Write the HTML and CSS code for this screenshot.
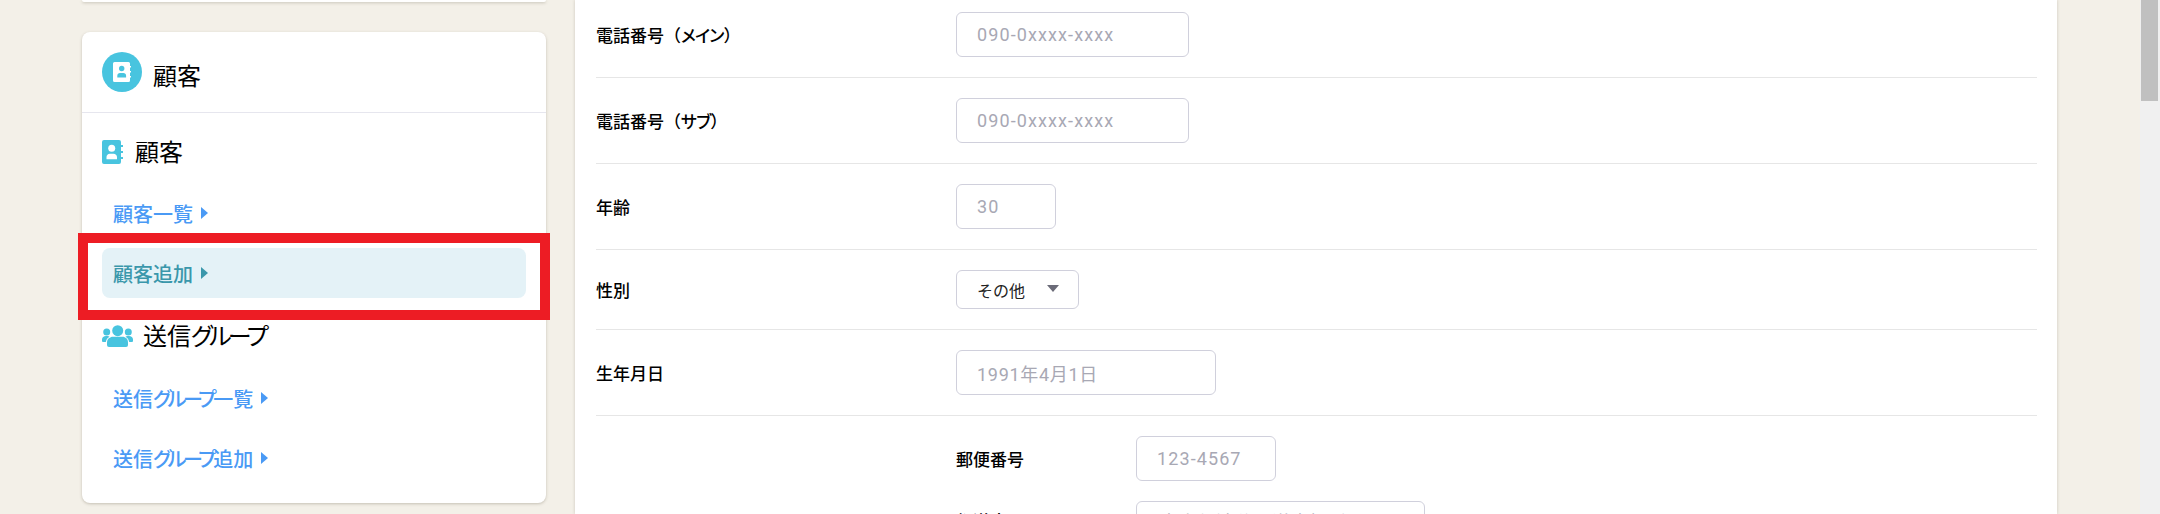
FILE: index.html
```html
<!DOCTYPE html>
<html lang="ja">
<head>
<meta charset="utf-8">
<title>顧客追加</title>
<link rel="stylesheet" href="styles.css">
</head>
<body>
<div class="page">
  <aside class="side">
    <div class="card-stub"></div>
    <nav class="card">
      <div class="card-head">
        <span class="circle">
          <svg class="book-white" viewBox="0 0 18 20"><path fill="#fff" d="M1.500 0h14a1.500 1.500 0 0 1 1.500 1.500V4h1v1.500h-1V9h1v1.500h-1V14h1v1.500h-1v3a1.500 1.500 0 0 1-1.500 1.500h-14A1.500 1.500 0 0 1 0 18.500v-17A1.500 1.500 0 0 1 1.500 0z"/><circle cx="8.700" cy="6.500" r="2.700" fill="#48c4df"/><path fill="#48c4df" d="M4.300 15.500v-1.800c0-1.600 1.200-2.700 2.700-2.700h3.400c1.500 0 2.700 1.100 2.700 2.700v1.800z"/></svg>
        </span>
        <span class="card-title">顧客</span>
      </div>
      <div class="group-head">
        <svg class="book" viewBox="0 0 21 25"><path fill="#48c4df" d="M2 0h15a2 2 0 0 1 2 2v3h2v2h-2v4h2v2h-2v4h2v2h-2v3a2 2 0 0 1-2 2H2a2 2 0 0 1-2-2V2a2 2 0 0 1 2-2z"/><circle cx="9.700" cy="8.300" r="3.500" fill="#fff"/><path fill="#fff" d="M4.500 19.300v-2.300c0-2 1.500-3.300 3.300-3.300h3.800c1.800 0 3.400 1.300 3.400 3.300v2.300z"/></svg>
        <span class="group-title">顧客</span>
      </div>
      <a class="link"><span>顧客一覧</span><i class="caret"></i></a>
      <div class="highlight">
        <a class="link active"><span>顧客追加</span><i class="caret"></i></a>
      </div>
      <div class="group-head second">
        <svg class="people" viewBox="0 0 31 22"><g fill="#48c4df"><circle cx="15.700" cy="5.700" r="5.500"/><circle cx="4.700" cy="7" r="3.500"/><circle cx="26.300" cy="7" r="3.500"/><path d="M7 22a2 2 0 0 1-2-2v-2.500C5 14 8 11.800 11 11.800h9.500c3 0 5.500 2.200 5.500 5.700V20a2 2 0 0 1-2 2z"/><path d="M0 16v-1.500C0 12.300 1.800 11 4 11h1.500c.8 0 1.500.3 2 .8C5.500 13 4.300 14.500 3.800 17H1a1 1 0 0 1-1-1z"/><path d="M31 16v-1.500c0-2.200-1.800-3.500-4-3.500h-1.500c-.8 0-1.500.3-2 .8 2 1.200 3.200 2.700 3.700 5.200H30a1 1 0 0 0 1-1z"/></g></svg>
        <span class="group-title">送信<span class="kana">グループ</span></span>
      </div>
      <a class="link"><span>送信<span class="kana">グループ</span>一覧</span><i class="caret"></i></a>
      <a class="link"><span>送信<span class="kana">グループ</span>追加</span><i class="caret"></i></a>
    </nav>
  </aside>
  <main class="panel">
    <div class="row">
      <div class="label">電話番号（<span class="kana">メイン</span>）</div>
      <div class="field w-tel">090-0xxxx-xxxx</div>
    </div>
    <div class="row">
      <div class="label">電話番号（<span class="kana">サブ</span>）</div>
      <div class="field w-tel">090-0xxxx-xxxx</div>
    </div>
    <div class="row">
      <div class="label">年齢</div>
      <div class="field w-age">30</div>
    </div>
    <div class="row">
      <div class="label">性別</div>
      <div class="select"><span>その他</span><i class="select-caret"></i></div>
    </div>
    <div class="row">
      <div class="label">生年月日</div>
      <div class="field w-date">1991年4月1日</div>
    </div>
    <div class="address">
      <div class="addr-row">
        <div class="addr-label">郵便番号</div>
        <div class="field w-zip">123-4567</div>
      </div>
      <div class="addr-row addr-raised">
        <div class="addr-label">都道府県</div>
        <div class="field w-pref">東京都渋谷区道玄坂ビ</div>
      </div>
    </div>
  </main>
  <div class="scrollbar"><div class="thumb"></div></div>
</div>
</body>
</html>
```
FILE: styles.css
```css
* { box-sizing: border-box; }
html, body { margin: 0; height: 514px; overflow: hidden; }
body { background: #f3f0e8; font-family: "Noto Sans CJK JP", "Noto Sans", sans-serif; color: #000; }
.kana { font-feature-settings: "palt"; letter-spacing: -.17em; }
.page { display: flex; height: 514px; overflow: hidden; }
.side { width: 464px; margin-left: 82px; flex: none; }
.card-stub { height: 2px; background: #fff; border-radius: 0 0 8px 8px; box-shadow: 0 1px 3px rgba(90,80,60,.3); margin-bottom: 30px; }
.card { height: 471px; background: #fff; border-radius: 8px; box-shadow: 0 1px 3px rgba(90,80,60,.3); display: flex; flex-direction: column; }
.card-head { height: 81px; flex: none; border-bottom: 1px solid #e6e6ee; display: flex; align-items: center; padding: 0 20px; gap: 11px; }
.circle { width: 40px; height: 40px; border-radius: 50%; background: #48c4df; display: flex; align-items: center; justify-content: center; }
.book-white { width: 18px; height: 20px; }
.card-title { font-size: 24px; line-height: 40px; padding-top: 6px; }
.group-head { display: flex; align-items: center; height: 36px; padding: 0 20px; font-size: 24px; gap: 12px; margin-top: 21px; margin-bottom: 8px; flex: none; }
.group-head.second { margin-top: -2px; margin-bottom: 9px; gap: 10px; }
.group-title { line-height: 34px; padding-bottom: 2px; }
.group-head .kana { letter-spacing: -.15em; }
.book { width: 21px; height: 25px; }
.people { width: 31px; height: 22px; }
.link { display: flex; align-items: center; gap: 8px; height: 50px; padding-left: 31px; margin-top: 10px; font-size: 20px; font-weight: 500; color: #4a9af5; flex: none; }
.caret { width: 0; height: 0; border-left: 7px solid currentColor; border-top: 6px solid transparent; border-bottom: 6px solid transparent; }
.highlight { margin: -5px -4px 0; border: 10px solid #ed1c24; padding: 5px 14px 12px; height: 87px; position: relative; flex: none; }
.highlight .link { margin: 0; padding-left: 11px; background: #e4f2f7; border-radius: 8px; color: #3a97ab; }
.panel { width: 1482px; margin-left: 29px; flex: none; background: #fff; padding: 0 20px 0 21px; box-shadow: 0 0 3px rgba(90,80,60,.25); height: 514px; overflow: hidden; }
.row { display: flex; align-items: center; border-bottom: 1px solid #e6e6e6; padding: 20px 0; }
.row:first-child { padding-top: 12px; }
.label { width: 360px; font-size: 17px; font-weight: 500; flex: none; }
.label .kana { letter-spacing: -.05em; }
.field, .select { border: 1px solid #d0d0dc; border-radius: 6px; height: 45px; display: flex; align-items: center; padding-left: 20px; font-family: Roboto, "Noto Sans CJK JP", sans-serif; font-size: 18px; letter-spacing: 1.1px; color: #a8a8b4; flex: none; }
.w-tel { width: 233px; }
.w-age { width: 100px; }
.w-date { width: 260px; letter-spacing: .7px; }
.w-zip { width: 140px; }
.w-pref { width: 289px; padding-left: 23px; letter-spacing: .7px; }
.select { width: 123px; height: 39px; color: #222; font-size: 16px; letter-spacing: 0; gap: 22px; }
.select-caret { width: 0; height: 0; margin-top: -3px; border-top: 7px solid #6b6b78; border-left: 6px solid transparent; border-right: 6px solid transparent; }
.address { padding: 20px 0 0 360px; display: flex; flex-direction: column; gap: 20px; }
.addr-row { display: flex; align-items: center; }
.addr-label { width: 180px; font-size: 17px; font-weight: 500; flex: none; }
.addr-raised .addr-label { margin-bottom: 6px; }
.addr-raised .field { padding-bottom: 6px; }
.scrollbar { position: absolute; right: 0; top: 0; width: 20px; height: 514px; background: #f0f0f0; }
.thumb { width: 17px; height: 101px; margin-left: 1px; background: #c0c0c0; }
```
